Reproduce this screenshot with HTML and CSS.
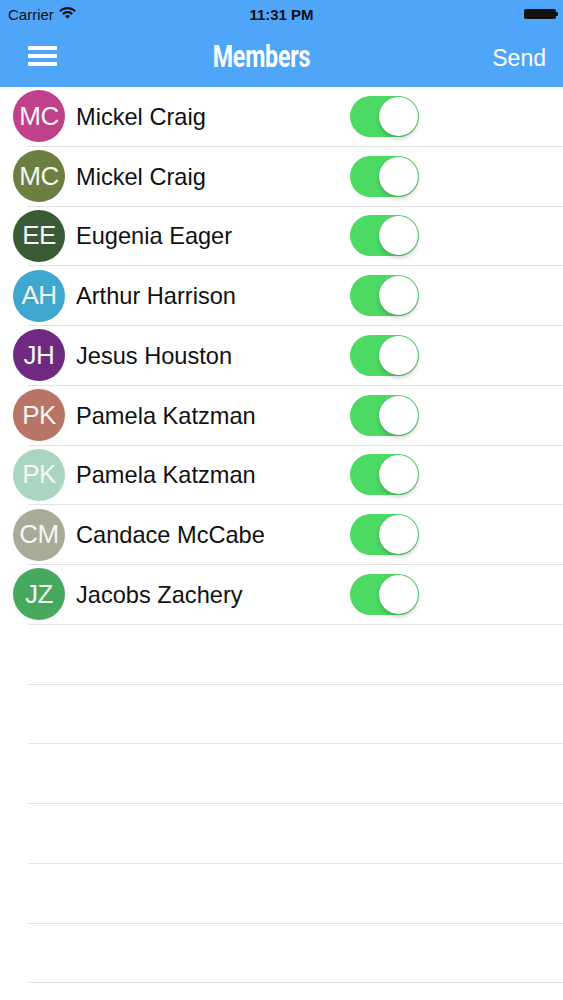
FILE: index.html
```html
<!DOCTYPE html>
<html>
<head>
<meta charset="utf-8">
<link rel="stylesheet" href="styles.css">
</head>
<body>
<header class="header">
  <div class="status">
    <div class="status-left">
      <span class="carrier">Carrier</span>
      <svg class="wifi" width="17" height="12" viewBox="0 0 17 12">
        <path d="M8.5 0C5.2 0 2.3 1.3 0.2 3.4l1.5 1.6C3.4 3.2 5.8 2.2 8.5 2.2s5.1 1 6.8 2.8l1.5-1.6C14.7 1.3 11.8 0 8.5 0z" fill="#111"/>
        <path d="M8.5 4.1c-2.1 0-4 .8-5.4 2.2l1.5 1.6c1-1 2.4-1.6 3.9-1.6s2.9.6 3.9 1.6l1.5-1.6C12.5 4.9 10.6 4.1 8.5 4.1z" fill="#111"/>
        <path d="M8.5 8c-1 0-1.9.4-2.5 1L8.5 11.8 11 9c-.6-.6-1.5-1-2.5-1z" fill="#111"/>
      </svg>
    </div>
    <span class="time">11:31 PM</span>
    <div class="battery"><span class="battery-body"></span><span class="battery-nub"></span></div>
  </div>
  <nav class="navbar">
    <div class="hamburger"><span></span><span></span><span></span></div>
    <h1 class="title">Members</h1>
    <span class="send">Send</span>
  </nav>
</header>
<main class="list">
  <div class="row"><div class="avatar c1">MC</div><div class="name">Mickel Craig</div><div class="toggle"><span class="knob"></span></div></div>
  <div class="row"><div class="avatar c2">MC</div><div class="name">Mickel Craig</div><div class="toggle"><span class="knob"></span></div></div>
  <div class="row"><div class="avatar c3">EE</div><div class="name">Eugenia Eager</div><div class="toggle"><span class="knob"></span></div></div>
  <div class="row"><div class="avatar c4">AH</div><div class="name">Arthur Harrison</div><div class="toggle"><span class="knob"></span></div></div>
  <div class="row"><div class="avatar c5">JH</div><div class="name">Jesus Houston</div><div class="toggle"><span class="knob"></span></div></div>
  <div class="row"><div class="avatar c6">PK</div><div class="name">Pamela Katzman</div><div class="toggle"><span class="knob"></span></div></div>
  <div class="row"><div class="avatar c7">PK</div><div class="name">Pamela Katzman</div><div class="toggle"><span class="knob"></span></div></div>
  <div class="row"><div class="avatar c8">CM</div><div class="name">Candace McCabe</div><div class="toggle"><span class="knob"></span></div></div>
  <div class="row"><div class="avatar c9">JZ</div><div class="name">Jacobs Zachery</div><div class="toggle"><span class="knob"></span></div></div>
  <div class="row empty"></div>
  <div class="row empty"></div>
  <div class="row empty"></div>
  <div class="row empty"></div>
  <div class="row empty"></div>
  <div class="row empty"></div>
</main>
</body>
</html>
```
FILE: styles.css
```css
html, body {
  margin: 0;
  padding: 0;
  background: #ffffff;
}
body {
  width: 563px;
  height: 1000px;
  overflow: hidden;
  font-family: "Liberation Sans", Arial, sans-serif;
}
.header {
  background: #4fa5f8;
  height: 87px;
  display: flex;
  flex-direction: column;
}
.status {
  height: 28px;
  display: flex;
  align-items: center;
  justify-content: space-between;
  padding: 0 5px 0 8px;
  position: relative;
  color: #111;
  font-size: 15px;
}
.status-left {
  display: flex;
  align-items: center;
  gap: 5px;
}
.wifi {
  margin-top: -2px;
}
.time {
  font-weight: bold;
  position: absolute;
  left: 0;
  right: 0;
  text-align: center;
  pointer-events: none;
}
.battery {
  display: flex;
  align-items: center;
}
.battery-body {
  width: 32px;
  height: 10px;
  background: #111;
  border-radius: 2px;
}
.battery-nub {
  width: 2px;
  height: 4px;
  background: #111;
  border-radius: 0 1px 1px 0;
}
.navbar {
  flex: 1;
  display: flex;
  align-items: center;
  justify-content: space-between;
  padding: 0 17px 0 28px;
  position: relative;
}
.hamburger {
  width: 29px;
  display: flex;
  flex-direction: column;
  gap: 4px;
  margin-top: -3px;
}
.hamburger span {
  display: block;
  height: 4px;
  background: #fff;
  border-radius: 1px;
}
.title {
  position: absolute;
  left: 0;
  right: 40px;
  text-align: center;
  margin: -3px 0 0 0;
  font-family: Roboto, "Liberation Sans", sans-serif;
  font-weight: 700;
  font-size: 31px;
  letter-spacing: -0.3px;
  color: #fff;
  pointer-events: none;
  transform: scaleX(0.75);
}
.send {
  color: #fff;
  font-size: 23px;
  margin-top: 2px;
}
.list {
  display: flex;
  flex-direction: column;
}
.row {
  height: 59.75px;
  box-sizing: border-box;
  display: grid;
  grid-template-columns: 52px 1fr 69px;
  column-gap: 11px;
  align-items: center;
  padding: 0 144px 1px 13px;
  background: linear-gradient(#e3e3e3, #e3e3e3) no-repeat 28px 100% / calc(100% - 28px) 1px;
}
.avatar {
  width: 52px;
  height: 52px;
  border-radius: 50%;
  display: flex;
  align-items: center;
  justify-content: center;
  color: #f6f6f6;
  font-size: 26px;
  letter-spacing: -0.5px;
}
.c1 { background: #c0408a; }
.c2 { background: #6b8040; }
.c3 { background: #395a34; }
.c4 { background: #3ea6cf; }
.c5 { background: #6e2a80; }
.c6 { background: #b87565; }
.c7 { background: #aad6c1; }
.c8 { background: #a7ab97; }
.c9 { background: #47a95d; }
.name {
  font-size: 23.6px;
  color: #111;
  white-space: nowrap;
  margin-top: 2px;
}
.toggle {
  width: 69px;
  height: 41px;
  border-radius: 21px;
  background: #4cd964;
  display: flex;
  align-items: center;
  justify-content: flex-end;
  padding: 1px;
  box-sizing: border-box;
}
.knob {
  width: 39px;
  height: 39px;
  border-radius: 50%;
  background: #fff;
  box-shadow: 0 3px 4px rgba(0, 0, 0, 0.18), 0 0 1px rgba(0, 0, 0, 0.2);
}
```
